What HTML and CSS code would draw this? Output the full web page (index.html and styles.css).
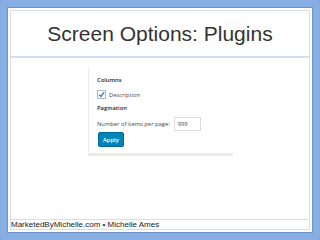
FILE: index.html
```html
<!DOCTYPE html>
<html lang="en">
<head>
  <meta charset="UTF-8" />
  <title>Screen Options: Plugins</title>
  <link rel="stylesheet" href="styles.css">
</head>
<body>
  <div class="slide">
    <div class="frame">
      <header class="slide-header">
        <h1>Screen Options: Plugins</h1>
      </header>

      <main class="slide-body">
        <div class="panel">
          <div class="panel-title">Columns</div>
          <label class="check-row">
            <span class="checkbox">
              <svg viewBox="0 0 8 8" width="7" height="7">
                <path d="M1.2 4.2 L3.2 6.2 L7 1.4" fill="none" stroke="#1e8cbe" stroke-width="1.5" />
              </svg>
            </span>
            <span>Description</span>
          </label>
          <div class="panel-title">Pagination</div>
          <div class="per-page">
            <span>Number of items per page:</span>
            <span class="num-input">999</span>
          </div>
          <button class="apply-btn">Apply</button>
        </div>
      </main>

      <footer class="slide-footer">MarketedByMichelle.com &bull; Michelle Ames</footer>
    </div>
  </div>
</body>
</html>
```

FILE: styles.css
```css
:root {
  --blue-bg: #86aee2;
  --slide-edge: #6f93c6;
  --frame-line: #d9dcef;
  --header-line: #d0def6;
  --wp-text: #444;
  --wp-blue: #0085ba;
}

body {
  margin: 0;
  width: 320px;
  height: 240px;
  background: var(--blue-bg);
  font-family: "Liberation Sans", Arial, sans-serif;
  overflow: hidden;
}

.slide {
  margin: 7px;
  height: 226px;
  box-sizing: border-box;
  background: #fff;
  border: 1px solid var(--slide-edge);
  padding: 2px;
}

.frame {
  height: 100%;
  box-sizing: border-box;
  border: 1px solid var(--frame-line);
  display: flex;
  flex-direction: column;
}

.slide-header {
  height: 47px;
  box-sizing: border-box;
  border-bottom: 2px solid var(--header-line);
  display: flex;
  align-items: center;
  justify-content: center;
  padding-top: 1px;
}

.slide-header h1 {
  margin: 0;
  font-size: 21px;
  font-weight: normal;
  color: #333;
}

.slide-body {
  flex: 1;
  padding: 9px 0 0 77px;
}

.panel {
  width: 136px;
  padding: 9px 0 6px 8px;
  border-left: 1px solid #ececec;
  border-bottom: 3px solid #ebebeb;
  font-family: "Open Sans", sans-serif;
  font-size: 5.8px;
  color: var(--wp-text);
  display: flex;
  flex-direction: column;
  align-items: flex-start;
}

.panel-title {
  font-weight: 600;
  color: #23282d;
  line-height: 8px;
}

.check-row {
  display: flex;
  align-items: center;
  gap: 3px;
  margin: 6px 0 5px;
  line-height: 8px;
}

.checkbox {
  width: 7px;
  height: 7px;
  border: 1px solid #b4b9be;
  display: flex;
  align-items: center;
  justify-content: center;
}

.per-page {
  display: flex;
  align-items: center;
  gap: 4px;
  margin: 5px 0 1px;
}

.num-input {
  width: 22px;
  height: 12px;
  padding-left: 3px;
  border: 1px solid #ddd;
  display: flex;
  align-items: center;
}

.apply-btn {
  margin: 0 0 0 1px;
  padding: 0 4px;
  height: 15px;
  border: 1px solid #006799;
  border-radius: 2px;
  background: var(--wp-blue);
  color: #fff;
  font-family: "Open Sans", sans-serif;
  font-size: 5.8px;
  font-weight: 600;
}

.slide-footer {
  margin-top: auto;
  border-top: 1px solid var(--frame-line);
  padding: 1px 0 0 0;
  font-size: 8px;
  color: #222;
  line-height: 8px;
}
```
